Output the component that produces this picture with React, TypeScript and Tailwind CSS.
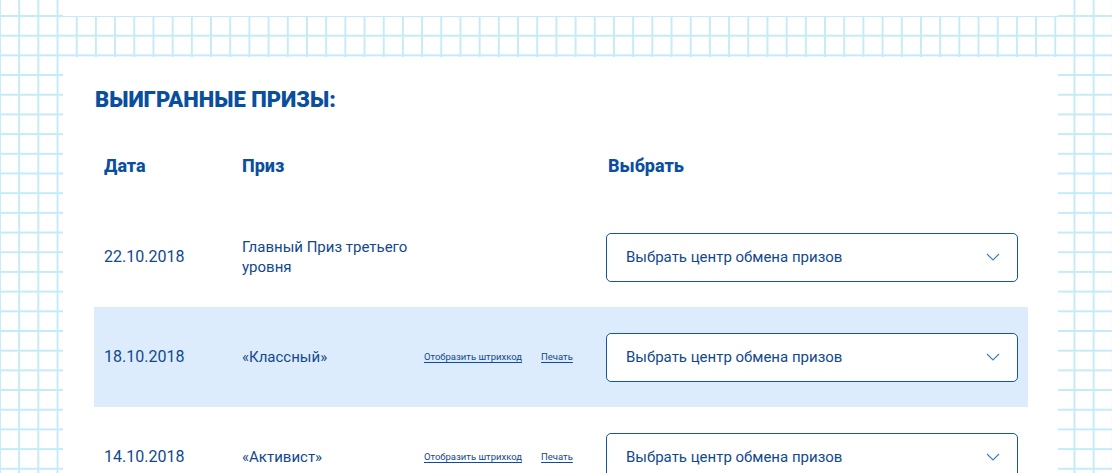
import React from "react";

const rows = [
  { date: "22.10.2018", prize: "Главный Приз третьего уровня", links: false, hl: false },
  { date: "18.10.2018", prize: "«Классный»", links: true, hl: true },
  { date: "14.10.2018", prize: "«Активист»", links: true, hl: false },
];

function Chevron() {
  return (
    <svg width="14" height="8" viewBox="0 0 14 8" fill="none">
      <polyline points="1,1 7,7 13,1" stroke="#3f7fc2" strokeWidth="1.2" />
    </svg>
  );
}

export default function App() {
  return (
    <div
      className="w-[1112px] h-[473px] overflow-hidden bg-white bg-[linear-gradient(to_right,#c4ebf8_2px,transparent_2px),linear-gradient(to_bottom,#c4ebf8_2px,transparent_2px)] bg-[size:19.2px_19.7px] bg-[position:-1px_15px] pl-[63px] pr-[54px] font-['Roboto',sans-serif]"
    >
      <div className="h-[16px] bg-white" />
      <div className="mt-[41px] h-[500px] bg-white pl-[31px] pr-[30px] pt-[31px]">
        <h1 className="pl-[1px] text-[22px] leading-[24px] font-black uppercase text-[#0a4f9e]">
          Выигранные призы:
        </h1>
        <div className="mt-[28px] flex h-[50px] items-center px-[10px] text-[18px] font-extrabold text-[#0a4f9e]">
          <div className="w-[138px]">Дата</div>
          <div className="w-[364px]">Приз</div>
          <div className="pl-[2px]">Выбрать</div>
        </div>
        <div className="mt-[17px] flex flex-col">
          {rows.map((r) => (
            <div
              key={r.date}
              className={
                "flex h-[100px] items-center px-[10px] text-[#11498c] " +
                (r.hl ? "bg-[#ddecfc]" : "")
              }
            >
              <div className="w-[138px] shrink-0 text-[16px]">{r.date}</div>
              <div className="w-[182px] shrink-0 pr-[10px] text-[15px] leading-[20px]">{r.prize}</div>
              <div className="flex w-[182px] shrink-0 items-center gap-[19px] text-[9.5px]">
                {r.links && (
                  <>
                    <span className="underline underline-offset-[2px] decoration-[#0a4f9e]">Отобразить штрихкод</span>
                    <span className="underline underline-offset-[2px] decoration-[#0a4f9e]">Печать</span>
                  </>
                )}
              </div>
              <div className="flex h-[49px] w-[412px] shrink-0 items-center justify-between rounded-[5px] border border-[#1557a0] bg-white pl-[19px] pr-[17px] text-[15px] text-[#11498c]">
                <span>Выбрать центр обмена призов</span>
                <Chevron />
              </div>
            </div>
          ))}
        </div>
      </div>
    </div>
  );
}
